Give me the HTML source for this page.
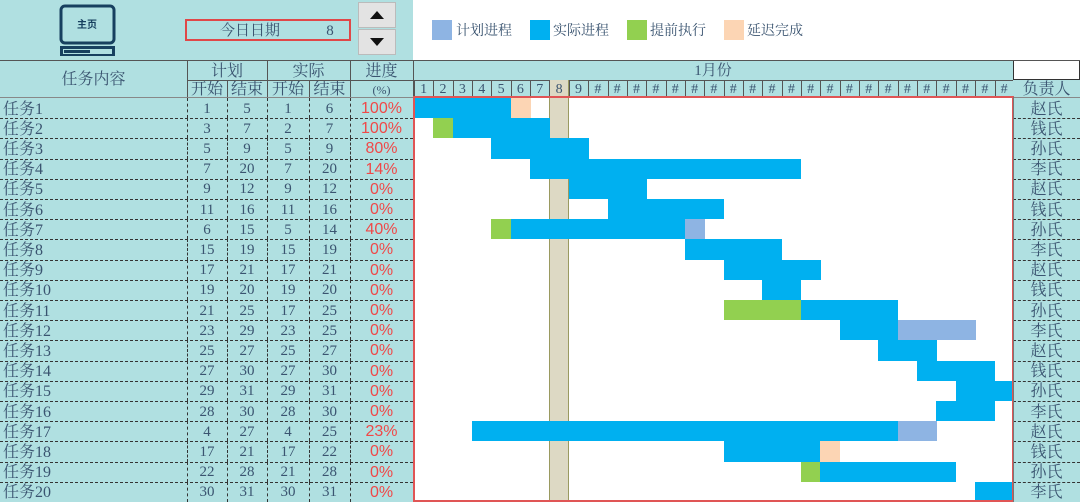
<!DOCTYPE html>
<html><head><meta charset="utf-8">
<style>
*{margin:0;padding:0;box-sizing:border-box}
body{width:1080px;height:502px;overflow:hidden;background:#fff;position:relative;font-family:"Liberation Serif","Noto Serif CJK SC","Noto Sans CJK SC",serif;color:#3a5470}
.a{position:absolute}
.c{position:absolute;display:flex;align-items:center;justify-content:center;font-size:15px;line-height:1}
.k{padding-top:3px}
</style></head><body>
<div class="a" style="left:0;top:0;width:413px;height:60px;background:#b0e0e1"></div>
<div class="a" style="left:0;top:60px;width:1080px;height:442px;background:#b0e0e1"></div>
<div class="a" style="left:1013px;top:60px;width:67px;height:20px;background:#fff;border:1px solid #333"></div>
<svg class="a" style="left:57px;top:4px" width="62" height="52" viewBox="0 0 62 52">
<rect x="4" y="2" width="53" height="37" rx="4" fill="none" stroke="#17405f" stroke-width="3"/>
<rect x="4.5" y="43.5" width="52" height="8" fill="#b0e0e1" stroke="#17405f" stroke-width="3"/>
<rect x="7" y="46" width="26" height="3" fill="#17405f"/>
<text x="30" y="24" font-size="10" font-weight="bold" fill="#17405f" text-anchor="middle" font-family="Noto Sans CJK SC,sans-serif">主页</text>
</svg>
<div class="a" style="left:185px;top:19px;width:166px;height:22px;border:2px solid #e04848"></div>
<div class="c k" style="left:215px;top:19px;width:70px;height:22px">今日日期</div>
<div class="c" style="left:320px;top:20px;width:20px;height:22px">8</div>
<div class="a" style="left:358px;top:2px;width:38px;height:26px;background:#e3e3e3;border:1px solid #bbb"></div>
<div class="a" style="left:358px;top:29px;width:38px;height:26px;background:#e3e3e3;border:1px solid #bbb"></div>
<div class="a" style="left:370px;top:11px;width:0;height:0;border-left:7px solid transparent;border-right:7px solid transparent;border-bottom:8px solid #111"></div>
<div class="a" style="left:370px;top:38px;width:0;height:0;border-left:7px solid transparent;border-right:7px solid transparent;border-top:8px solid #111"></div>
<div class="a" style="left:432px;top:20px;width:20px;height:20px;background:#8eb4e3"></div>
<div class="c k" style="left:456px;top:20px;width:60px;height:20px;justify-content:flex-start;font-size:14px">计划进程</div>
<div class="a" style="left:530px;top:20px;width:20px;height:20px;background:#00b0f0"></div>
<div class="c k" style="left:553px;top:20px;width:60px;height:20px;justify-content:flex-start;font-size:14px">实际进程</div>
<div class="a" style="left:627px;top:20px;width:20px;height:20px;background:#92d050"></div>
<div class="c k" style="left:650px;top:20px;width:60px;height:20px;justify-content:flex-start;font-size:14px">提前执行</div>
<div class="a" style="left:724px;top:20px;width:20px;height:20px;background:#fcd5b4"></div>
<div class="c k" style="left:747px;top:20px;width:60px;height:20px;justify-content:flex-start;font-size:14px">延迟完成</div>
<div id="g"></div>
<script>
var h='';
function box(x,y,w,hh,st){h+='<div class="a" style="left:'+x+'px;top:'+y+'px;width:'+w+'px;height:'+hh+'px;'+st+'"></div>';}
function txt(x,y,w,hh,t,st,cls){h+='<div class="c '+(cls||'')+'" style="left:'+x+'px;top:'+y+'px;width:'+w+'px;height:'+hh+'px;'+(st||'')+'">'+t+'</div>';}
box(0,60,1080,1,'background:#555');
box(0,97,1080,1,'background:#888');
txt(0,60,187,37,'任务内容','font-size:16px','k');
txt(187,60,80,20,'计划','font-size:16px','k');txt(267,60,83,20,'实际','font-size:16px','k');
txt(350,60,63,20,'进度','font-size:16px','k');txt(350,80,63,17,'(%)','font-size:12px','k');
txt(187,80,40,17,'开始','font-size:16px','k');txt(227,80,40,17,'结束','font-size:16px','k');
txt(267,80,42,17,'开始','font-size:16px','k');txt(309,80,41,17,'结束','font-size:16px','k');
box(187,80,226,1,'background:#555');
[187,227,267,309,350,413].forEach(function(x){box(x,x==227||x==309?80:60,1,x==227||x==309?17:37,'background:#555')});
txt(413,60,600,20,'1月份','font-size:15px','k');
box(413,80,600,1,'background:#555');
var dw=19.35,x0=414;
box(x0+7*dw,80,dw,422,'background:#ddd9c4;border-left:1px solid #9a9a60;border-right:1px solid #9a9a60');
box(413,98,600,404,'background:#fff');
box(x0+7*dw,98,dw,404,'background:#ddd9c4;border-left:1px solid #9a9a60;border-right:1px solid #9a9a60');
for(var d=1;d<=31;d++){var x=x0+(d-1)*dw;box(x,80,1,17,'background:#555');txt(x,81,dw,17,d<10?d:'#','font-size:14px');}
txt(1013,80,67,17,'负责人','font-size:16px','k');
var T=[[1,5,1,6,'100%','赵氏'],[3,7,2,7,'100%','钱氏'],[5,9,5,9,'80%','孙氏'],[7,20,7,20,'14%','李氏'],[9,12,9,12,'0%','赵氏'],[11,16,11,16,'0%','钱氏'],[6,15,5,14,'40%','孙氏'],[15,19,15,19,'0%','李氏'],[17,21,17,21,'0%','赵氏'],[19,20,19,20,'0%','钱氏'],[21,25,17,25,'0%','孙氏'],[23,29,23,25,'0%','李氏'],[25,27,25,27,'0%','赵氏'],[27,30,27,30,'0%','钱氏'],[29,31,29,31,'0%','孙氏'],[28,30,28,30,'0%','李氏'],[4,27,4,25,'23%','赵氏'],[17,21,17,22,'0%','钱氏'],[22,28,21,28,'0%','孙氏'],[30,31,30,31,'0%','李氏']];
var rh=20.2;
T.forEach(function(t,i){var y=98+i*rh;
 txt(3,y,180,rh,'任务'+(i+1),'justify-content:flex-start;font-size:16px','k');
 txt(187,y+1,40,rh,t[0]);txt(227,y+1,40,rh,t[1]);txt(267,y+1,42,rh,t[2]);txt(309,y+1,41,rh,t[3]);
 txt(350,y+1,63,rh,t[4],'color:#f04848;font-size:16px;font-family:Liberation Sans,sans-serif');
 txt(1013,y,67,rh,t[5],'font-size:16px','k');
 if(i>0){box(0,y,413,0,'border-top:1px dashed #333');box(1013,y,67,0,'border-top:1px dashed #333');}
 [187,227,267,309,350].forEach(function(x){box(x,y,0,rh,'border-left:1px dashed #333')});
 for(var d=t[2];d<=t[3];d++){var c=d<t[0]?'#92d050':(d>t[1]?'#fcd5b4':'#00b0f0');box(x0+(d-1)*dw,y,dw+0.5,rh,'background:'+c);}
 for(var d=t[3]+1;d<=t[1];d++){box(x0+(d-1)*dw,y,dw+0.5,rh,'background:#8eb4e3');}
});
box(413,96,601,406,'border:2px solid #e05555');
box(1013,97,1,405,'background:#777');
document.getElementById('g').innerHTML=h;
</script>
</body></html>
